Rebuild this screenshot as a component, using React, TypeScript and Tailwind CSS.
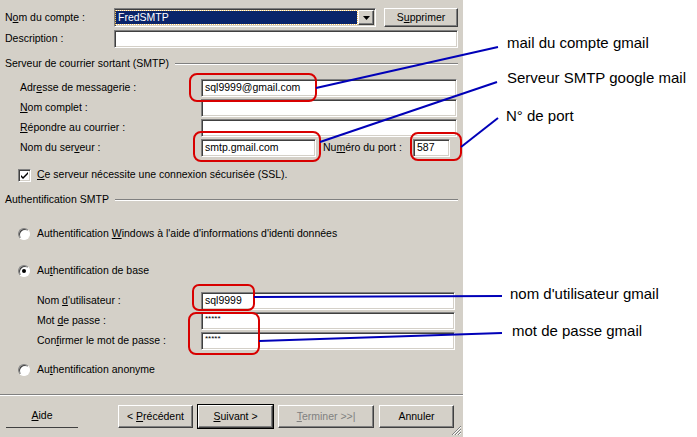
import React from 'react';

const sunken =
  'border border-t-[#808080] border-l-[#808080] border-b-white border-r-white bg-white shadow-[inset_1px_1px_0_#404040,inset_-1px_-1px_0_#d4d0c8]';
const raised =
  'border border-t-white border-l-white border-b-[#404040] border-r-[#404040] shadow-[inset_-1px_-1px_0_#808080] bg-[#d4d0c8]';

const U: React.FC<{ children: React.ReactNode }> = ({ children }) => <span className="underline">{children}</span>;

const Field: React.FC<{ className: string; value?: string; stars?: boolean }> = ({ className, value, stars }) => (
  <div className={`${sunken} ${className} h-[18px] flex items-center pl-[3px] overflow-hidden`}>
    {stars ? <span className="text-[8px] leading-none -mt-[4px]">*****</span> : value}
  </div>
);

const GroupHeader: React.FC<{ title: string; className: string }> = ({ title, className }) => (
  <div className={`flex items-center h-[14px] pl-[5px] pr-[5px] ${className}`}>
    <span>{title}</span>
    <div className="flex-1 ml-[6px] h-[2px] border-t border-t-[#808080] border-b border-b-white" />
  </div>
);

const Radio: React.FC<{ checked?: boolean; children: React.ReactNode; className: string }> = ({ checked, children, className }) => (
  <div className={`flex items-center h-[14px] pl-[18px] ${className}`}>
    <div className="w-[12px] h-[12px] rounded-full bg-white border border-t-[#808080] border-l-[#808080] border-b-white border-r-white shadow-[inset_1px_1px_0_#404040] flex items-center justify-center">
      {checked && <div className="w-[4px] h-[4px] rounded-full bg-black" />}
    </div>
    <span className="ml-[7px]">{children}</span>
  </div>
);

const Btn: React.FC<{ className: string; children: React.ReactNode }> = ({ className, children }) => (
  <div className={`h-[23px] flex items-center justify-center ${className}`}>{children}</div>
);

export default function App() {
  return (
    <div className="relative w-[697px] h-[437px] flex bg-white font-['Liberation_Sans',Arial,sans-serif] text-[10.5px] text-black overflow-hidden">
      {/* dialog */}
      <div className="relative w-[463px] h-[437px] bg-[#d4d0c8] flex flex-col pt-[8px]">
        <div className="flex items-center h-[19px] pl-[5px]">
          <span className="w-[109px]">N<U>o</U>m du compte :</span>
          <div className={`${sunken} w-[262px] h-[19px] flex items-center pl-[1px] pr-[1px]`}>
            <div className="flex-1 h-[13px] bg-[#0a246a] text-white flex items-center pl-[2px] outline-dotted outline-1 outline-[#f0c060]">FredSMTP</div>
            <div className={`${raised} w-[16px] h-[15px] ml-[1px] flex items-center justify-center`}>
              <svg width="7" height="4" viewBox="0 0 7 4"><path d="M0 0h7L3.5 4z" fill="#000" /></svg>
            </div>
          </div>
          <div className={`${raised} ml-[8px] w-[74px] h-[19px] flex items-center justify-center`}>
            S<U>u</U>pprimer
          </div>
        </div>
        <div className="flex items-center h-[18px] mt-[3px] pl-[5px]">
          <span className="w-[109px]">Description :</span>
          <Field className="w-[344px]" />
        </div>

        <GroupHeader title="Serveur de courrier sortant (SMTP)" className="mt-[9px]" />

        <div className="flex items-center mt-[8px] pl-[20px]">
          <span className="w-[181px]">Adr<U>e</U>sse de messagerie :</span>
          <Field className="w-[256px]" value="sql9999@gmail.com" />
        </div>
        <div className="flex items-center mt-[2px] pl-[20px]">
          <span className="w-[181px]"><U>N</U>om complet :</span>
          <Field className="w-[256px]" />
        </div>
        <div className="flex items-center mt-[2px] pl-[20px]">
          <span className="w-[181px]"><U>R</U>épondre au courrier :</span>
          <Field className="w-[256px]" />
        </div>
        <div className="flex items-center mt-[2px] pl-[20px]">
          <span className="w-[181px]">Nom du ser<U>v</U>eur :</span>
          <Field className="w-[115px]" value="smtp.gmail.com" />
          <span className="w-[97px] pl-[7px]">Nu<U>m</U>éro du port :</span>
          <Field className="w-[37px]" value="587" />
        </div>

        <div className="flex items-center h-[16px] mt-[10px] pl-[18px]">
          <div className={`${sunken} w-[13px] h-[13px] flex items-center justify-center`}>
            <svg width="7" height="7" viewBox="0 0 7 7"><path d="M0 3l2 2 5-5v2L2 7 0 5z" fill="#000" /></svg>
          </div>
          <span className="ml-[6px]"><U>C</U>e serveur nécessite une connexion sécurisée (SSL).</span>
        </div>

        <GroupHeader title="Authentification SMTP" className="mt-[10px]" />

        <Radio className="mt-[20px]">Authentification <U>W</U>indows à l'aide d'informations d'identi données</Radio>
        <Radio className="mt-[23px]" checked>Au<U>t</U>hentification de base</Radio>

        <div className="flex items-center mt-[14px] pl-[37px]">
          <span className="w-[164px]">Nom <U>d</U>'utilisateur :</span>
          <Field className="w-[254px]" value="sql9999" />
        </div>
        <div className="flex items-center mt-[2px] pl-[37px]">
          <span className="w-[164px]">Mot <U>d</U>e passe :</span>
          <Field className="w-[254px]" stars />
        </div>
        <div className="flex items-center mt-[2px] pl-[37px]">
          <span className="w-[164px]">Con<U>f</U>irmer le mot de passe :</span>
          <Field className="w-[254px]" stars />
        </div>

        <Radio className="mt-[13px]">Au<U>t</U>hentification anonyme</Radio>

        <div className="mt-[17px] h-[2px] border-t border-t-[#808080] border-b border-b-white" />

        <div className="flex mt-[9px] pl-[6px]">
          <Btn className="w-[72px] border-b border-b-[#404040]"><span><U>A</U>ide</span></Btn>
          <Btn className={`${raised} w-[75px] ml-[40px]`}><span>&lt; <U>P</U>récédent</span></Btn>
          <Btn className={`${raised} w-[75px] ml-[5px] outline outline-1 outline-black`}><span><U>S</U>uivant &gt;</span></Btn>
          <Btn className={`${raised} w-[96px] ml-[5px] text-[#808080]`}><span><U>T</U>erminer &gt;&gt;|</span></Btn>
          <Btn className={`${raised} w-[75px] ml-[5px]`}><span>Annuler</span></Btn>
        </div>

        <svg className="absolute right-[1px] bottom-[1px]" width="11" height="11" viewBox="0 0 11 11">
          <path d="M10 1L1 10M10 4L4 10M10 7L7 10" stroke="#808080" strokeWidth="1" />
          <path d="M10 2L2 10M10 5L5 10M10 8L8 10" stroke="#ffffff" strokeWidth="1" />
        </svg>
      </div>

      {/* annotations */}
      <div className="flex flex-col pl-[44px] pt-[34px] text-[15px] leading-[18px] whitespace-nowrap">
        <span>mail du compte gmail</span>
        <span className="mt-[17px]">Serveur SMTP google mail</span>
        <span className="mt-[20px] -ml-[1px]">N° de port</span>
        <span className="mt-[160px] ml-[3px]">nom d'utilisateur gmail</span>
        <span className="mt-[19px] ml-[5px]">mot de passe gmail</span>
      </div>

      <svg className="absolute inset-0 pointer-events-none" width="697" height="437" viewBox="0 0 697 437">
        <g fill="none" stroke="#d80000" strokeWidth="2">
          <rect x="190" y="74" width="126" height="27" rx="7" />
          <rect x="194" y="132" width="126" height="29" rx="7" />
          <rect x="411" y="133" width="50" height="27" rx="7" />
          <rect x="193" y="285" width="61" height="25" rx="6" />
          <rect x="189" y="313" width="70" height="41" rx="7" />
        </g>
        <g stroke="#0000b8" strokeWidth="2">
          <line x1="316" y1="88" x2="498" y2="47" />
          <line x1="320" y1="142" x2="497" y2="82" />
          <line x1="461" y1="147" x2="498" y2="118" />
          <line x1="254" y1="297" x2="502" y2="296" />
          <line x1="259" y1="341" x2="502" y2="333" />
        </g>
      </svg>
    </div>
  );
}
